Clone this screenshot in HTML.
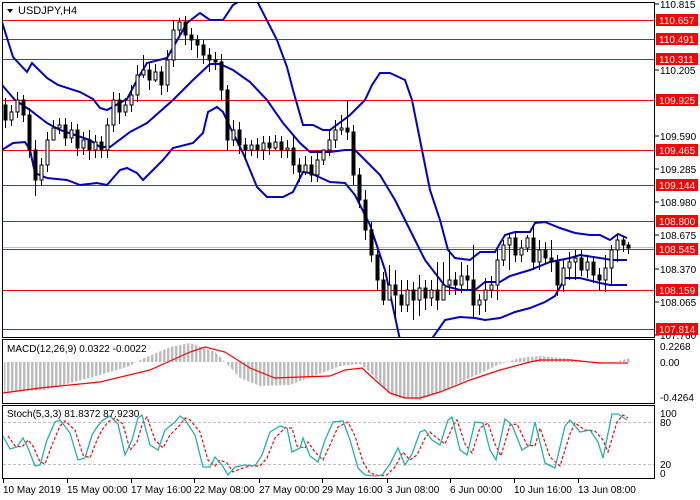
<!DOCTYPE html>
<html><head><meta charset="utf-8"><style>
html,body{margin:0;padding:0;background:#fff;width:700px;height:500px;overflow:hidden}
svg{display:block;font-family:"Liberation Sans",sans-serif}
</style></head><body>
<svg width="700" height="500" xmlns="http://www.w3.org/2000/svg">
<defs>
<pattern id="bars" x="3" y="0" width="4" height="10" patternUnits="userSpaceOnUse"><rect x="0" y="0" width="2.5" height="10" fill="#bdbdbd"/></pattern>
<clipPath id="mc"><rect x="3" y="3" width="651" height="334"/></clipPath>
</defs>
<line x1="2" y1="247.5" x2="655" y2="247.5" stroke="#c0c0c0"/>
<g stroke="#f00" stroke-width="1">
<line x1="2" y1="20.5" x2="655" y2="20.5"/><line x1="2" y1="39.5" x2="655" y2="39.5"/><line x1="2" y1="59.5" x2="655" y2="59.5"/><line x1="2" y1="100.5" x2="655" y2="100.5"/><line x1="2" y1="150.5" x2="655" y2="150.5"/><line x1="2" y1="185.5" x2="655" y2="185.5"/><line x1="2" y1="221.5" x2="655" y2="221.5"/><line x1="2" y1="249.5" x2="655" y2="249.5"/><line x1="2" y1="290.5" x2="655" y2="290.5"/><line x1="2" y1="329.5" x2="655" y2="329.5"/>
</g>
<g clip-path="url(#mc)" fill="none" stroke="#0000cc" stroke-width="2">
<polyline points="2,22 13,57 27,72 32,63 47,78 58,85 80,92 93,99 100,108 107,110 127,99 137,80 147,63 167,58 187,23 200,13 210,20 223,20 233,5 240,1 257,1 277,40 287,67 293,90 303,125 313,125 323,130 330,130 350,115 365,100 372,85 380,73 390,73 405,80 412,100 420,140 430,190 440,220 448,250 455,258 470,260 480,252 495,252 505,235 515,232 530,232 535,223 545,222 560,228 575,233 590,235 600,235 610,240 618,234 627,238"/>
<polyline points="2,85 15,100 30,110 47,123 60,130 75,135 90,140 100,147 110,147 130,132 147,123 173,100 193,80 210,64 220,64 233,70 250,82 267,100 283,123 300,143 310,152 330,152 345,150 355,150 365,160 380,175 395,200 410,230 425,260 445,286 460,290 475,290 485,282 500,282 510,276 530,270 550,262 570,258 580,255 600,258 612,260 627,260"/>
<polyline points="2,150 13,143 25,142 30,150 35,173 47,178 67,180 80,185 97,183 107,185 120,170 127,168 137,173 143,180 163,160 173,148 193,143 203,133 208,112 217,107 223,112 230,127 243,153 257,187 267,197 283,197 293,192 303,172 310,173 330,182 345,183 355,195 370,225 385,270 400,340"/>
<polyline points="431,340 445,320 460,317 475,318 485,320 500,318 515,312 530,308 545,302 555,296 565,278 580,278 600,283 610,285 627,285"/>
</g>
<path stroke="#000" stroke-width="1" fill="none" d="M5.5 98V128M11.5 105V126M17.5 92V118M23.5 95V122M29.5 108V158M35.5 140V196M41.5 158V186M47.5 132V172M53.5 120V136M59.5 118V134M65.5 118V146M71.5 122V143M77.5 124V156M83.5 132V155M89.5 130V160M95.5 135V158M101.5 136V158M107.5 118V158M113.5 92V132M119.5 93V124M125.5 98V116M131.5 85V112M137.5 65V102M143.5 55V78M149.5 62V90M155.5 64V82M161.5 66V95M167.5 50V92M173.5 20V67M179.5 18V36M185.5 16V45M191.5 28V50M197.5 35V58M203.5 40V64M209.5 48V72M215.5 52V70M221.5 54V100M227.5 85V150M233.5 120V146M239.5 122V154M245.5 138V160M251.5 140V156M257.5 138V158M263.5 136V160M269.5 136V155M275.5 135V150M281.5 136V158M287.5 140V158M293.5 135V174M299.5 158V182M305.5 156V175M311.5 156V182M317.5 150V182M323.5 150V165M329.5 130V156M335.5 120V148M341.5 115V135M347.5 100V140M353.5 125V185M359.5 168V208M365.5 190V240M371.5 222V262M377.5 250V290M383.5 272V305M389.5 265V300M395.5 270V318M401.5 280V312M407.5 280V312M413.5 282V320M419.5 275V316M425.5 280V310M431.5 280V306M437.5 262V310M443.5 262V300M449.5 250V295M455.5 272V295M461.5 262V293M467.5 265V290M473.5 245V317M479.5 294V315M485.5 278V312M491.5 276V298M497.5 250V300M503.5 240V266M509.5 233V270M515.5 232V262M521.5 240V262M527.5 235V252M533.5 225V270M539.5 240V270M545.5 242V263M551.5 240V272M557.5 255V296M563.5 260V292M569.5 252V280M575.5 250V280M581.5 250V276M587.5 255V278M593.5 258V283M599.5 268V290M605.5 255V292M611.5 245V286M617.5 235V262M623.5 236V252M628.5 242V254"/>
<path fill="#fff" stroke="#000" stroke-width="1" d="M10 112h3v8h-3zM16 100h3v12h-3zM40 165h3v15h-3zM46 140h3v25h-3zM52 128h3v12h-3zM58 125h3v3h-3zM70 130h3v8h-3zM82 140h3v8h-3zM94 142h3v8h-3zM106 125h3v25h-3zM112 100h3v25h-3zM124 105h3v7h-3zM130 95h3v10h-3zM136 75h3v20h-3zM142 70h3v5h-3zM154 72h3v8h-3zM166 60h3v25h-3zM172 30h3v30h-3zM178 22h3v8h-3zM232 130h3v10h-3zM250 145h3v5h-3zM262 143h3v7h-3zM274 142h3v6h-3zM286 148h3v2h-3zM304 165h3v7h-3zM316 160h3v15h-3zM322 150h3v10h-3zM328 140h3v10h-3zM334 130h3v10h-3zM340 128h3v2h-3zM388 285h3v15h-3zM406 290h3v15h-3zM418 288h3v12h-3zM430 290h3v8h-3zM442 285h3v15h-3zM448 280h3v5h-3zM460 276h3v9h-3zM478 300h3v5h-3zM484 290h3v10h-3zM490 285h3v5h-3zM496 260h3v25h-3zM502 245h3v15h-3zM508 238h3v7h-3zM520 248h3v7h-3zM526 238h3v10h-3zM538 250h3v12h-3zM562 268h3v17h-3zM568 262h3v6h-3zM574 258h3v4h-3zM586 262h3v8h-3zM604 268h3v12h-3zM610 250h3v18h-3zM616 240h3v10h-3z"/>
<path fill="#000" stroke="#000" stroke-width="1" d="M4 105h3v15h-3zM22 100h3v15h-3zM28 115h3v35h-3zM34 150h3v30h-3zM64 125h3v13h-3zM76 130h3v18h-3zM88 140h3v10h-3zM100 142h3v8h-3zM118 100h3v12h-3zM148 70h3v10h-3zM160 72h3v13h-3zM184 22h3v13h-3zM190 35h3v5h-3zM196 40h3v5h-3zM202 45h3v10h-3zM208 55h3v5h-3zM214 60h3v2h-3zM220 62h3v28h-3zM226 90h3v50h-3zM238 130h3v15h-3zM244 145h3v5h-3zM256 145h3v5h-3zM268 143h3v5h-3zM280 142h3v8h-3zM292 148h3v17h-3zM298 165h3v7h-3zM310 165h3v10h-3zM346 128h3v4h-3zM352 132h3v43h-3zM358 175h3v25h-3zM364 200h3v30h-3zM370 230h3v25h-3zM376 255h3v25h-3zM382 280h3v20h-3zM394 285h3v10h-3zM400 295h3v10h-3zM412 290h3v10h-3zM424 288h3v10h-3zM436 290h3v10h-3zM454 280h3v5h-3zM466 276h3v4h-3zM472 280h3v25h-3zM514 238h3v17h-3zM532 238h3v24h-3zM544 250h3v8h-3zM550 258h3v4h-3zM556 262h3v23h-3zM580 258h3v12h-3zM592 262h3v13h-3zM598 275h3v5h-3zM622 240h3v5h-3zM627 245h3v3h-3z"/>
<rect x="2.5" y="2.5" width="652" height="335" fill="none" stroke="#000"/>
<polygon points="7,9 13,9 10,13" fill="#000"/><text x="18" y="14" font-size="11">USDJPY,H4</text>
<g font-size="10">
<g stroke="#000"><line x1="655" y1="4" x2="659" y2="4"/><line x1="655" y1="70" x2="659" y2="70"/><line x1="655" y1="136" x2="659" y2="136"/><line x1="655" y1="169" x2="659" y2="169"/><line x1="655" y1="202" x2="659" y2="202"/><line x1="655" y1="235" x2="659" y2="235"/><line x1="655" y1="269" x2="659" y2="269"/><line x1="655" y1="302" x2="659" y2="302"/><line x1="655" y1="335" x2="659" y2="335"/></g>
<text x="660" y="8">110.815</text><text x="660" y="74">110.205</text><text x="660" y="140">109.590</text><text x="660" y="173">109.285</text><text x="660" y="206">108.980</text><text x="660" y="239">108.675</text><text x="660" y="273">108.370</text><text x="660" y="306">108.065</text><text x="660" y="339">107.760</text>
<g fill="#f00"><rect x="656" y="14" width="42" height="12"/><rect x="656" y="33" width="42" height="12"/><rect x="656" y="53" width="42" height="12"/><rect x="656" y="94" width="42" height="12"/><rect x="656" y="144" width="42" height="12"/><rect x="656" y="179" width="42" height="12"/><rect x="656" y="215" width="42" height="12"/><rect x="656" y="243" width="42" height="12"/><rect x="656" y="284" width="42" height="12"/><rect x="656" y="323" width="42" height="12"/></g>
<g fill="#fff"><text x="659" y="24">110.657</text><text x="659" y="43">110.491</text><text x="659" y="63">110.311</text><text x="659" y="104">109.925</text><text x="659" y="154">109.465</text><text x="659" y="189">109.144</text><text x="659" y="225">108.800</text><text x="659" y="253">108.545</text><text x="659" y="294">108.159</text><text x="659" y="333">107.814</text></g>
</g>
<polygon fill="url(#bars)" points="4,362 4,392 45,390 100,375 130,366 140,360 170,347 190,343 215,352 225,362 240,378 260,386 290,385 340,366 360,364 370,372 390,395 400,398 420,400 440,392 470,378 500,364 520,358 540,356 580,360 600,364 615,362 630,358 630,362"/>
<polyline fill="none" stroke="#f00" stroke-width="1.2" points="3,393 40,388 70,385 100,382 150,370 190,352 205,347 225,352 250,368 275,378 300,377 330,376 345,370 362,368 375,380 390,393 405,398 420,398 440,392 470,380 500,370 530,362 540,360 570,360 600,363 628,363"/>
<rect x="2.5" y="339.5" width="652" height="64" fill="none" stroke="#000"/>
<text x="7" y="352" font-size="10">MACD(12,26,9) 0.0322 -0.0022</text>
<g font-size="10"><text x="660" y="350">0.2268</text><text x="660" y="366">0.00</text><text x="660" y="401">-0.4264</text></g>
<line x1="3" y1="422.5" x2="654" y2="422.5" stroke="#c0c0c0" stroke-dasharray="3,2"/><line x1="3" y1="464.5" x2="654" y2="464.5" stroke="#c0c0c0" stroke-dasharray="3,2"/>
<polyline transform="translate(5,0)" fill="none" stroke="#f00" stroke-width="1.2" stroke-dasharray="3,2" points="3,436 10,446 17,447 23,440 28,446 35,462 40,464 47,445 55,426 60,421 70,430 78,455 85,458 92,440 97,430 103,422 110,418 118,424 125,450 132,442 138,422 142,417 150,440 158,448 165,435 175,425 180,418 185,420 195,432 203,460 210,466 215,460 222,463 228,472 235,469 245,466 255,466 262,458 270,438 280,428 287,428 292,446 300,448 303,442 310,452 318,460 325,445 333,427 343,422 350,436 358,462 365,473 375,476 382,475 390,467 398,452 405,460 412,455 420,438 425,432 432,438 440,444 448,426 452,420 460,444 467,453 475,428 483,423 490,444 496,456 505,425 512,424 522,445 530,446 535,428 545,457 555,466 565,434 570,423 580,430 590,431 598,440 603,452 612,422 618,415 623,418"/>
<polyline fill="none" stroke="#20b2aa" stroke-width="1.3" points="3,436 10,449 17,447 23,438 28,448 35,466 40,465 47,440 55,422 60,420 70,433 78,460 85,458 92,435 97,427 103,420 110,416 118,424 125,455 132,440 138,418 142,415 150,445 158,450 165,430 175,422 180,416 185,420 195,435 203,467 210,467 215,457 222,465 228,475 235,467 245,465 255,466 262,455 270,432 280,426 287,428 292,452 300,448 303,438 310,456 318,462 325,440 333,422 343,421 350,440 358,468 365,475 375,476 382,475 390,464 398,448 405,465 412,454 420,432 425,430 432,440 440,445 448,420 452,417 460,450 467,455 475,422 483,423 490,450 496,460 505,419 512,425 522,450 530,445 535,422 545,463 555,468 565,426 570,420 580,432 590,430 598,442 603,458 612,414 618,414 627,420"/>
<rect x="2.5" y="405.5" width="652" height="73" fill="none" stroke="#000"/>
<text x="7" y="417" font-size="10">Stoch(5,3,3) 81.8372 87.9230</text>
<g font-size="10"><text x="660" y="417">100</text><text x="660" y="426">80</text><text x="660" y="468">20</text><text x="660" y="477">0</text></g>
<g stroke="#000"><line x1="3.5" y1="479" x2="3.5" y2="483"/><line x1="67.5" y1="479" x2="67.5" y2="483"/><line x1="131.5" y1="479" x2="131.5" y2="483"/><line x1="194.5" y1="479" x2="194.5" y2="483"/><line x1="259.5" y1="479" x2="259.5" y2="483"/><line x1="322.5" y1="479" x2="322.5" y2="483"/><line x1="387.5" y1="479" x2="387.5" y2="483"/><line x1="450.5" y1="479" x2="450.5" y2="483"/><line x1="514.5" y1="479" x2="514.5" y2="483"/><line x1="578.5" y1="479" x2="578.5" y2="483"/></g>
<g font-size="10"><text x="3" y="493">10 May 2019</text><text x="67" y="493">15 May 00:00</text><text x="131" y="493">17 May 16:00</text><text x="194" y="493">22 May 08:00</text><text x="259" y="493">27 May 00:00</text><text x="322" y="493">29 May 16:00</text><text x="387" y="493">3 Jun 08:00</text><text x="450" y="493">6 Jun 00:00</text><text x="514" y="493">10 Jun 16:00</text><text x="578" y="493">13 Jun 08:00</text></g>
</svg>
</body></html>
